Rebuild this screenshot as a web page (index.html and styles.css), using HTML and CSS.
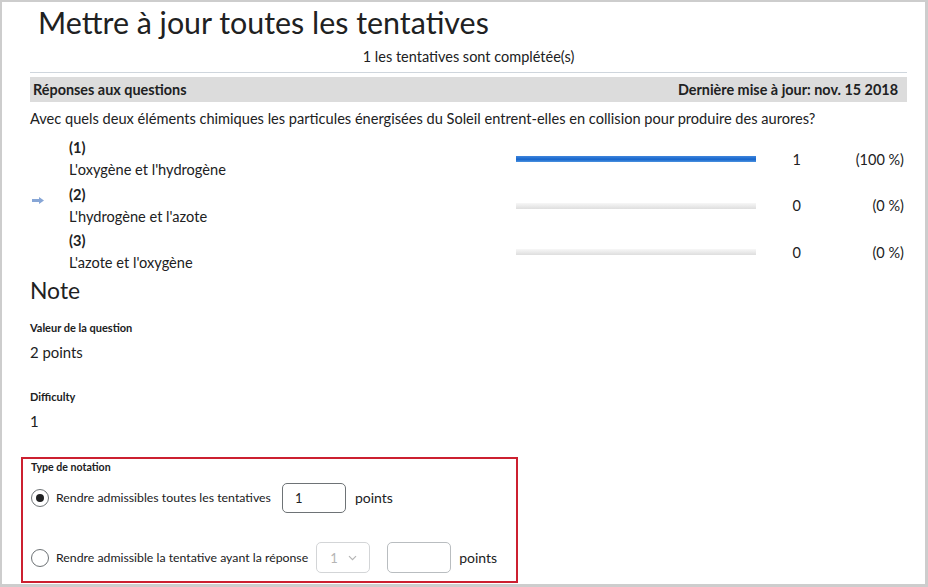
FILE: index.html
```html
<!DOCTYPE html>
<html lang="fr">
<head>
<meta charset="utf-8">
<title>Mettre à jour toutes les tentatives</title>
<link rel="stylesheet" href="styles.css">
</head>
<body>
<div class="frame">
  <h1 class="title">Mettre à jour toutes les tentatives</h1>
  <div class="subtitle">1 les tentatives sont complétée(s)</div>
  <div class="header-bar">
    <span>Réponses aux questions</span>
    <span>Dernière mise à jour: nov. 15 2018</span>
  </div>
  <p class="question">Avec quels deux éléments chimiques les particules énergisées du Soleil entrent-elles en collision pour produire des aurores?</p>
  <div class="answers">
    <div class="answer">
      <div class="marker"></div>
      <div class="answer-text"><div class="num">(1)</div><div>L'oxygène et l'hydrogène</div></div>
      <div class="bar"><div class="fill" style="width:100%"></div></div>
      <div class="count">1</div>
      <div class="pct">(100 %)</div>
    </div>
    <div class="answer">
      <div class="marker"><svg width="12" height="7" viewBox="0 0 12 7"><path d="M0 2h7V0l5 3.5L7 7V5H0z" fill="#87a6d6"/></svg></div>
      <div class="answer-text"><div class="num">(2)</div><div>L'hydrogène et l'azote</div></div>
      <div class="bar"><div class="fill" style="width:0%"></div></div>
      <div class="count">0</div>
      <div class="pct">(0 %)</div>
    </div>
    <div class="answer">
      <div class="marker"></div>
      <div class="answer-text"><div class="num">(3)</div><div>L'azote et l'oxygène</div></div>
      <div class="bar"><div class="fill" style="width:0%"></div></div>
      <div class="count">0</div>
      <div class="pct">(0 %)</div>
    </div>
  </div>
  <h2 class="note">Note</h2>
  <div class="field">
    <div class="field-label">Valeur de la question</div>
    <div class="field-value">2 points</div>
  </div>
  <div class="field">
    <div class="field-label">Difficulty</div>
    <div class="field-value">1</div>
  </div>
  <div class="grading">
    <div class="grading-label">Type de notation</div>
    <div class="option first">
      <span class="radio checked"></span>
      <span class="opt-label">Rendre admissibles toutes les tentatives</span>
      <span class="input">1</span>
      <span class="unit">points</span>
    </div>
    <div class="option second">
      <span class="radio"></span>
      <span class="opt-label">Rendre admissible la tentative ayant la réponse</span>
      <span class="select">1<svg width="9" height="6" viewBox="0 0 9 6"><path d="M1 1.2l3.5 3.5L8 1.2" fill="none" stroke="#b5b5b5" stroke-width="1.2"/></svg></span>
      <span class="input empty"></span>
      <span class="unit">points</span>
    </div>
  </div>
</div>
</body>
</html>
```
FILE: styles.css
```css
html, body {
  margin: 0;
  padding: 0;
  background: #ffffff;
}
body {
  font-family: Lato, "Noto Sans", sans-serif;
  color: #202122;
}
.frame {
  box-sizing: border-box;
  width: 928px;
  height: 587px;
  border-style: solid;
  border-color: #cdcdcd;
  border-width: 2px 3px 3px 2px;
  padding: 0 18px 0 28px;
  overflow: hidden;
}
.title {
  margin: 3px 0 0 8px;
  font-size: 30.4px;
  font-weight: 400;
  line-height: 34px;
}
.subtitle {
  text-align: center;
  font-size: 14.5px;
  line-height: 18px;
  margin-top: 9px;
  padding-bottom: 6px;
  border-bottom: 1px solid #cfd6dd;
}
.header-bar {
  margin-top: 4px;
  height: 25px;
  background: #dcdcdc;
  display: flex;
  justify-content: space-between;
  align-items: center;
  padding: 0 9px 0 3px;
  font-size: 14.4px;
  font-weight: 700;
}
.question {
  margin: 8px 0 0 0;
  font-size: 14.6px;
  line-height: 18px;
}
.answers {
  margin-top: 8px;
}
.answer {
  display: grid;
  grid-template-columns: 39px 447px 240px 62px 1fr;
  align-items: center;
  height: 46.5px;
}
.marker {
  display: flex;
  align-items: center;
  padding-left: 2px;
  padding-bottom: 10px;
}
.answer-text {
  font-size: 14.6px;
  line-height: 22px;
}
.num {
  font-weight: 700;
}
.bar {
  height: 6px;
  background: linear-gradient(#f7f7f7, #dedede);
}
.fill {
  height: 100%;
  background: linear-gradient(#3f85dc, #1766cc 55%, #4b92e0);
}
.count {
  font-size: 14.5px;
  text-align: right;
  padding-right: 17px;
}
.pct {
  font-size: 14.5px;
  text-align: right;
  padding-right: 3px;
}
.note {
  margin: 0;
  font-size: 22.9px;
  font-weight: 400;
  line-height: 28px;
}
.field {
  margin-top: 17px;
}
.field + .field {
  margin-top: 29px;
}
.field-label {
  font-size: 11px;
  font-weight: 700;
  line-height: 14px;
}
.field-value {
  margin-top: 8px;
  font-size: 14.9px;
  line-height: 18px;
}
.grading {
  box-sizing: border-box;
  margin: 27px 0 0 -9px;
  width: 497px;
  height: 126px;
  border: 2px solid #cc2030;
  padding: 1px 8px 0 8px;
}
.grading-label {
  font-size: 10.6px;
  font-weight: 700;
  line-height: 14px;
}
.option {
  display: flex;
  align-items: center;
  font-size: 12.3px;
  white-space: nowrap;
}
.option.first {
  margin-top: 9px;
  height: 30px;
}
.option.second {
  margin-top: 29.5px;
  height: 31px;
}
.radio {
  box-sizing: border-box;
  width: 18px;
  height: 18px;
  border-radius: 50%;
  border: 1px solid #6e7376;
  background: #ffffff;
  margin-right: 7px;
  display: flex;
  align-items: center;
  justify-content: center;
  flex: none;
}
.radio.checked::after {
  content: "";
  width: 8px;
  height: 8px;
  border-radius: 50%;
  background: #202122;
}
.opt-label {
  margin-right: 11px;
}
.option.second .opt-label {
  margin-right: 8px;
}
.input {
  box-sizing: border-box;
  width: 64px;
  height: 30px;
  border: 1px solid #6e7376;
  border-radius: 5px;
  padding-left: 12px;
  display: flex;
  align-items: center;
  margin-right: 9px;
  font-size: 13px;
  flex: none;
}
.input.empty {
  border-color: #b9bdc0;
  height: 31px;
  margin-right: 8px;
}
.select {
  box-sizing: border-box;
  width: 54px;
  height: 31px;
  border: 1px solid #d3d5d7;
  border-radius: 5px;
  padding: 0 12px 0 13px;
  display: flex;
  align-items: center;
  justify-content: space-between;
  color: #b5b5b5;
  margin-right: 17px;
  font-size: 13px;
  flex: none;
}
.unit {
  font-size: 14px;
}
```
